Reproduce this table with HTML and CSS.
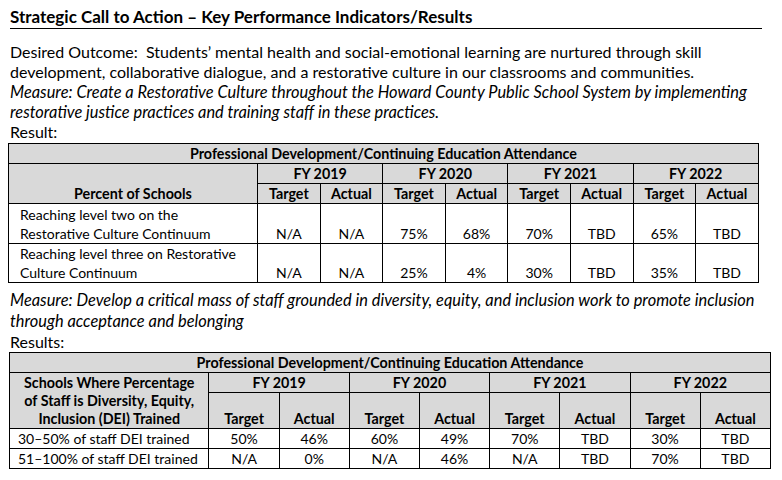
FILE: index.html
```html
<!DOCTYPE html>
<html>
<head>
<meta charset="utf-8">
<link rel="stylesheet" href="styles.css">
</head>
<body>
<div class="page">
  <h1 class="title">Strategic Call to Action – Key Performance Indicators/Results</h1>
  <p class="outcome">Desired Outcome:&nbsp; Students’ mental health and social-emotional learning are nurtured through skill development, collaborative dialogue, and a restorative culture in our classrooms and communities.</p>
  <p class="measure">Measure: Create a Restorative Culture throughout the Howard County Public School System by implementing restorative justice practices and training staff in these practices.</p>
  <p class="label">Result:</p>
  <table class="kpi kpi-one">
    <colgroup>
      <col class="c-first1">
      <col class="c-n1"><col class="c-n1"><col class="c-n1"><col class="c-n1">
      <col class="c-n1"><col class="c-n1"><col class="c-n1"><col class="c-n1">
    </colgroup>
    <tr class="r-title"><th colspan="9">Professional Development/Continuing Education Attendance</th></tr>
    <tr class="r-fy">
      <th rowspan="2" class="bottom">Percent of Schools</th>
      <th colspan="2">FY 2019</th><th colspan="2">FY 2020</th><th colspan="2">FY 2021</th><th colspan="2">FY 2022</th>
    </tr>
    <tr class="r-sub">
      <th>Target</th><th>Actual</th><th>Target</th><th>Actual</th><th>Target</th><th>Actual</th><th>Target</th><th>Actual</th>
    </tr>
    <tr class="r-data2">
      <td class="name">Reaching level two on the<br>Restorative Culture Continuum</td>
      <td>N/A</td><td>N/A</td><td>75%</td><td>68%</td><td>70%</td><td>TBD</td><td>65%</td><td>TBD</td>
    </tr>
    <tr class="r-data2b">
      <td class="name">Reaching level three on Restorative<br>Culture Continuum</td>
      <td>N/A</td><td>N/A</td><td>25%</td><td>4%</td><td>30%</td><td>TBD</td><td>35%</td><td>TBD</td>
    </tr>
  </table>
  <p class="measure measure-two">Measure: Develop a critical mass of staff grounded in diversity, equity, and inclusion work to promote inclusion through acceptance and belonging</p>
  <p class="label label-two">Results:</p>
  <table class="kpi kpi-two">
    <colgroup>
      <col class="c-first2">
      <col class="c-n2"><col class="c-n2"><col class="c-n2"><col class="c-n2">
      <col class="c-n2"><col class="c-n2"><col class="c-n2"><col class="c-n2">
    </colgroup>
    <tr class="r-title"><th colspan="9">Professional Development/Continuing Education Attendance</th></tr>
    <tr class="r-fy2">
      <th rowspan="2" class="multi">Schools Where Percentage<br>of Staff is Diversity, Equity,<br>Inclusion (DEI) Trained</th>
      <th colspan="2">FY 2019</th><th colspan="2">FY 2020</th><th colspan="2">FY 2021</th><th colspan="2">FY 2022</th>
    </tr>
    <tr class="r-sub2">
      <th>Target</th><th>Actual</th><th>Target</th><th>Actual</th><th>Target</th><th>Actual</th><th>Target</th><th>Actual</th>
    </tr>
    <tr class="r-data1">
      <td class="name2">30–50% of staff DEI trained</td>
      <td>50%</td><td>46%</td><td>60%</td><td>49%</td><td>70%</td><td>TBD</td><td>30%</td><td>TBD</td>
    </tr>
    <tr class="r-data1b">
      <td class="name2">51–100% of staff DEI trained</td>
      <td>N/A</td><td>0%</td><td>N/A</td><td>46%</td><td>N/A</td><td>TBD</td><td>70%</td><td>TBD</td>
    </tr>
  </table>
</div>
</body>
</html>
```

FILE: styles.css
```css
html, body {
  margin: 0;
  padding: 0;
  background: #ffffff;
}
body {
  font-family: Lato, "Open Sans", sans-serif;
  color: #000;
}
.page {
  padding: 7px 0 0 10px;
  width: 772px;
  box-sizing: border-box;
}
.title {
  margin: 0;
  width: 752px;
  font-size: 17px;
  font-weight: bold;
  line-height: 20px;
  padding-bottom: 1px;
  border-bottom: 1px solid #000;
}
p {
  margin: 0;
  font-size: 16px;
  line-height: 20px;
}
.outcome {
  margin-top: 13px;
}
.measure {
  font-style: italic;
  font-size: 16.4px;
}
.measure-two {
  margin-top: 6px;
  line-height: 21px;
}
.label {
  line-height: 20px;
}
.label-two {
  line-height: 21px;
}
.kpi {
  border-collapse: collapse;
  table-layout: fixed;
  margin-left: -2px;
  font-size: 14px;
  line-height: 19px;
}
.kpi-one {
  width: 750px;
  margin-top: 1px;
}
.kpi-two {
  width: 762px;
  margin-left: -1px;
}
.c-first1 { width: 249px; }
.c-n1 { width: 62.6px; }
.c-first2 { width: 199px; }
.c-n2 { width: 70px; }
.kpi th, .kpi td {
  border: 1px solid #000;
  padding: 0 3px;
  text-align: center;
  vertical-align: bottom;
  white-space: nowrap;
  overflow: hidden;
}
.kpi th {
  background: #d9d9d9;
  font-weight: bold;
  font-size: 14.3px;
}
.r-title th { height: 18px; }
.r-fy th { height: 19px; }
.r-sub th { height: 18px; }
.r-data2 td { height: 39px; }
.r-data2b td { height: 38px; }
.r-fy2 th { height: 18px; }
.r-sub2 th { height: 35px; }
.r-data1 td { height: 18.5px; }
.r-data1b td { height: 18.5px; }
.kpi td.name {
  text-align: left;
  padding-left: 11px;
}
.kpi td.name2 {
  text-align: left;
  padding-left: 8px;
}
.kpi th.multi {
  line-height: 18px;
  padding: 0 4px;
}
```
